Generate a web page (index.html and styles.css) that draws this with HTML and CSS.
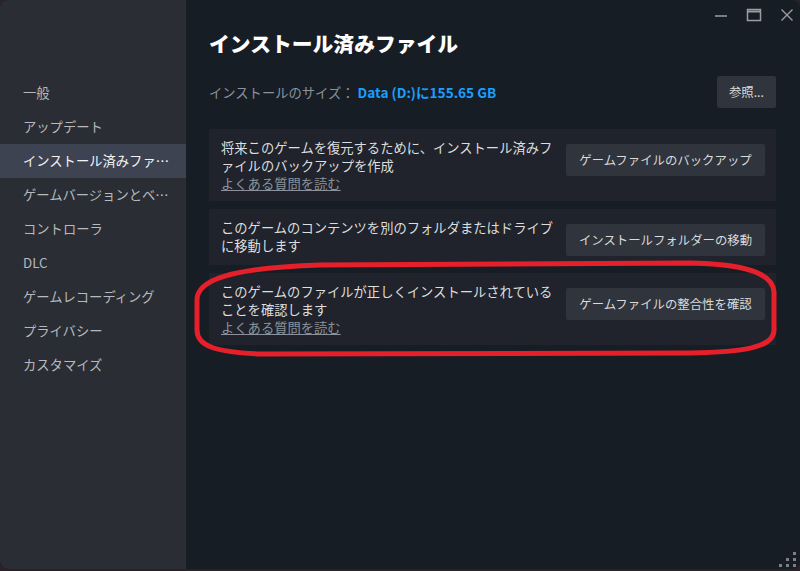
FILE: index.html
```html
<!DOCTYPE html>
<html lang="ja">
  <head>
    <meta charset="utf-8">
    <title>インストール済みファイル</title>
    <link rel="stylesheet" href="styles.css">
  </head>
  <body>
    <div class="window">
      <nav class="sidebar">
        <div class="nav-item">一般</div>
        <div class="nav-item">アップデート</div>
        <div class="nav-item selected">インストール済みファイル</div>
        <div class="nav-item">ゲームバージョンとベータ</div>
        <div class="nav-item">コントローラ</div>
        <div class="nav-item">DLC</div>
        <div class="nav-item">ゲームレコーディング</div>
        <div class="nav-item">プライバシー</div>
        <div class="nav-item">カスタマイズ</div>
      </nav>

      <main class="content">
        <div class="titlebar">
          <svg width="14" height="14" viewBox="0 0 14 14"><line x1="1" y1="8" x2="13" y2="8" stroke="#9a9ea4" stroke-width="1.5"/></svg>
          <svg width="16" height="14" viewBox="0 0 16 14"><rect x="1.5" y="1.5" width="13" height="11" fill="none" stroke="#9a9ea4" stroke-width="1.5"/><line x1="1.5" y1="3.5" x2="14.5" y2="3.5" stroke="#9a9ea4" stroke-width="2"/></svg>
          <svg width="14" height="14" viewBox="0 0 14 14"><path d="M1.5 1.5 L12.5 12.5 M12.5 1.5 L1.5 12.5" stroke="#9a9ea4" stroke-width="1.4"/></svg>
        </div>

        <h1>インストール済みファイル</h1>

        <div class="size-row">
          <div class="size-text">
            <span class="size-label">インストールのサイズ：</span>
            <span class="size-value">Data (D:)に155.65 GB</span>
          </div>
          <button class="btn">参照...</button>
        </div>

        <div class="cards">
          <div class="card">
            <div class="card-text">
              <p>将来このゲームを復元するために、インストール済みファイルのバックアップを作成</p>
              <a href="#" class="faq">よくある質問を読む</a>
            </div>
            <button class="btn wide">ゲームファイルのバックアップ</button>
          </div>
          <div class="card">
            <div class="card-text">
              <p>このゲームのコンテンツを別のフォルダまたはドライブに移動します</p>
            </div>
            <button class="btn wide">インストールフォルダーの移動</button>
          </div>
          <div class="card">
            <div class="card-text">
              <p>このゲームのファイルが正しくインストールされていることを確認します</p>
              <a href="#" class="faq">よくある質問を読む</a>
            </div>
            <button class="btn wide">ゲームファイルの整合性を確認</button>
          </div>
        </div>

        <!-- hand-drawn red marker around the verify card -->
        <svg class="marker" width="800" height="571" viewBox="0 0 800 571">
          <path d="M197 300 C197 280 230 268 320 265 L690 263 C742 264 773 272 774 292 L774 330 C774 348 742 352 690 353 L260 354 C215 352 197 346 197 330 Z"
                fill="none" stroke="#e5202b" stroke-width="5"/>
        </svg>

        <svg class="grip" width="18" height="18" viewBox="0 0 18 18">
          <rect x="14" y="2" width="3" height="3" fill="#7b7f86"/>
          <rect x="7" y="8" width="3" height="3" fill="#7b7f86"/>
          <rect x="14" y="8" width="3" height="3" fill="#7b7f86"/>
          <rect x="0" y="14" width="3" height="3" fill="#7b7f86"/>
          <rect x="7" y="14" width="3" height="3" fill="#7b7f86"/>
          <rect x="14" y="14" width="3" height="3" fill="#7b7f86"/>
        </svg>
      </main>
    </div>
  </body>
</html>
```

FILE: styles.css
```css
html {
  font-family: "Noto Sans CJK JP", "Noto Sans", sans-serif;
}

body {
  margin: 0;
  background: #2a2228;
}

.window {
  display: flex;
  width: 800px;
  height: 569px;
  border-radius: 8px;
  overflow: hidden;
  background: #171d25;
}

.sidebar {
  width: 186px;
  flex-shrink: 0;
  padding-top: 76px;
  background: #2a2d34;
}

.nav-item {
  height: 34px;
  line-height: 34px;
  padding: 0 8px 0 23px;
  font-size: 13.3px;
  color: #b6b9bd;
  white-space: nowrap;
  overflow: hidden;
  text-overflow: ellipsis;
}

.nav-item.selected {
  background: #3d4350;
  color: #f2f3f4;
}

.content {
  flex: 1;
  padding: 0 24px 0 23px;
}

.titlebar {
  display: flex;
  justify-content: flex-end;
  align-items: center;
  gap: 18px;
  height: 30px;
  margin-right: -18px;
}

h1 {
  margin: -2px 0 0;
  line-height: 30px;
  font-size: 20.8px;
  font-weight: 900;
  color: #ffffff;
}

.size-row {
  display: flex;
  justify-content: space-between;
  align-items: center;
  margin-top: 18px;
}

.size-text {
  font-size: 13.3px;
}

.size-label {
  color: #8b929a;
}

.size-value {
  color: #1a9fff;
  font-weight: 600;
  font-size: 13.6px;
}

.btn {
  height: 32px;
  padding: 0 12px;
  border: none;
  border-radius: 2px;
  background: #30343c;
  color: #d9dbdd;
  font-family: inherit;
  font-size: 12.4px;
}

.btn.wide {
  width: 199px;
  margin-top: 5px;
  flex-shrink: 0;
}

.cards {
  display: flex;
  flex-direction: column;
  gap: 8px;
  margin-top: 21px;
}

.card {
  display: flex;
  justify-content: space-between;
  align-items: flex-start;
  padding: 10px 11px 9px 12px;
  background: #20232b;
}

.card-text {
  width: 340px;
  font-size: 13.3px;
  line-height: 18px;
  color: #dcdedf;
}

.card-text p {
  margin: 0;
}

.faq {
  display: block;
  line-height: 17px;
  color: #8b929a;
  text-decoration: underline;
}

.marker {
  position: absolute;
  left: 0;
  top: 0;
  pointer-events: none;
}

.grip {
  position: absolute;
  right: 3px;
  bottom: 3px;
}
```
